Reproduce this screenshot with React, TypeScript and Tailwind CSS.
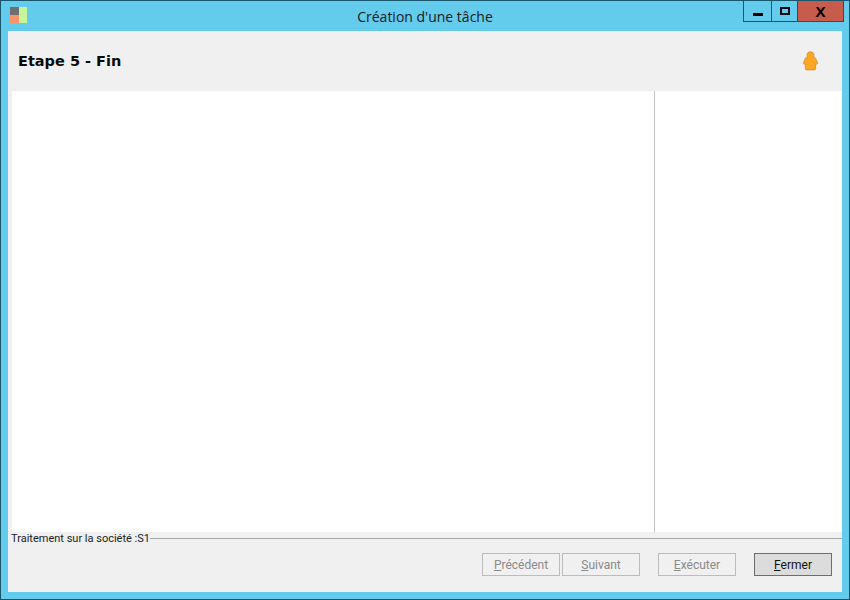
const uiFont = { fontFamily: '"Open Sans", "Noto Sans", sans-serif' };
const formFont = { fontFamily: 'Roboto, "Noto Sans", sans-serif' };

function AppIcon() {
  return (
    <svg width="18" height="18" viewBox="0 0 18 18">
      <rect x="0" y="0" width="9" height="8" fill="#6f6f6f" />
      <rect x="0" y="8" width="9" height="8" fill="#f79468" />
      <rect x="9" y="0" width="8" height="16" fill="#c9f59a" />
    </svg>
  );
}

function UserIcon() {
  return (
    <svg width="17" height="21" viewBox="0 0 18 22">
      <path
        d="M9 .8c2.300 0 3.700 1.400 3.700 3.100 0 .8-.3 1.500-.8 2 1.600.4 2.500 1.300 3 2.700l1.500 3.700c.3.800 0 1.300-.8 1.500l-1.200.3v4.700c0 .8-.4 1.100-1.100 1.100H4.700c-.7 0-1.100-.3-1.100-1.100v-4.700l-1.200-.3c-.8-.2-1.100-.7-.8-1.500l1.500-3.700c.5-1.400 1.400-2.300 3-2.700-.5-.5-.8-1.200-.8-2C5.300 2.200 6.700.8 9 .8z"
        fill="#fba624"
        stroke="#c98a2e"
        strokeWidth="0.8"
      />
    </svg>
  );
}

function WizardButton({ label, hotkey, rest, active }: { label: string; hotkey: string; rest: string; active?: boolean }) {
  return (
    <button
      aria-label={label}
      style={formFont}
      className={
        active
          ? "h-[23px] w-[78px] border border-[#6d6d6d] bg-[#dcdcdc] text-[12px] leading-[20px] text-[#111]"
          : "h-[23px] w-[78px] border border-[#bcbcbc] bg-[#f0f0f0] text-[12px] leading-[20px] text-[#8a8a8a]"
      }
    >
      <span className="underline">{hotkey}</span>
      {rest}
    </button>
  );
}

export default function App() {
  return (
    <div
      className="flex h-[600px] w-[850px] flex-col overflow-hidden border border-[#17566d] bg-[#63cbec]"
      style={uiFont}
    >
      <div className="grid h-[30px] shrink-0 grid-cols-[1fr_auto_1fr]">
        <div className="pl-[9px] pt-[6px]">
          <AppIcon />
        </div>
        <div className="pt-[6px] text-[14px] leading-[19px] text-[#1a1a1a]">Création d'une tâche</div>
        <div className="flex justify-end pr-[5px]">
          <div className="flex h-[21px] border border-t-0 border-[#2a4f5e]">
            <div className="flex w-[28px] items-center justify-center border-r border-[#2a4f5e] pt-[6px]">
              <div className="h-[3px] w-[10px] bg-black" />
            </div>
            <div className="flex w-[26px] items-center justify-center border-r border-[#2a4f5e]">
              <div className="h-[8px] w-[10px] border-2 border-[#0a0a14]" />
            </div>
            <div className="flex w-[45px] items-center justify-center bg-[#c75c4c] text-[15px] font-bold leading-none text-black">
              X
            </div>
          </div>
        </div>
      </div>

      <div className="mx-[7px] flex min-h-0 flex-1 flex-col bg-[#f0f0f0]">
        <div className="flex h-[60px] shrink-0 items-center justify-between pl-[10px] pr-[23px]">
          <div
            className="pt-[2px] text-[14.5px] font-bold text-[#0a0a0a]"
            style={{ fontFamily: '"DejaVu Sans", sans-serif' }}
          >
            Etape 5 - Fin
          </div>
          <UserIcon />
        </div>

        <div className="ml-[4px] flex min-h-0 flex-1 bg-white">
          <div className="w-[643px] border-r border-[#c4c4c4]" />
          <div className="flex-1" />
        </div>

        <div className="h-[60px] shrink-0">
          <div className="flex items-center pl-[3px]">
            <span className="text-[11px] leading-[13px] text-[#1c1c1c]" style={formFont}>
              Traitement sur la société :S1
            </span>
            <div className="h-px flex-1 bg-[#a8a8a8]" />
          </div>
          <div className="flex justify-end pr-[10px] pt-[8px]">
            <div className="flex gap-[2px]">
              <WizardButton label="Précédent" hotkey="P" rest="récédent" />
              <WizardButton label="Suivant" hotkey="S" rest="uivant" />
            </div>
            <div className="ml-[18px] flex">
              <WizardButton label="Exécuter" hotkey="E" rest="xécuter" />
            </div>
            <div className="ml-[18px] flex">
              <WizardButton label="Fermer" hotkey="F" rest="ermer" active />
            </div>
          </div>
        </div>
      </div>

      <div className="h-[7px] shrink-0" />
    </div>
  );
}
